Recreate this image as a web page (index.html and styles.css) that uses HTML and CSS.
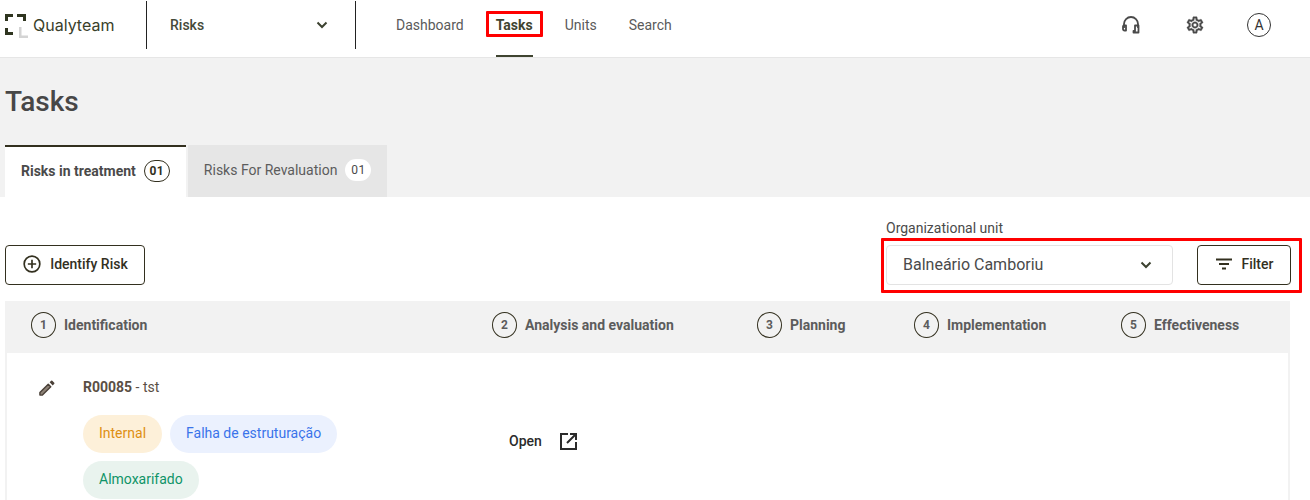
FILE: index.html
```html
<!DOCTYPE html>
<html lang="en">
<head>
<meta charset="utf-8">
<title>Tasks</title>
<link rel="stylesheet" href="styles.css">
</head>
<body>
<header class="topbar">
  <div class="brand">
    <svg class="brand-mark" width="23" height="24" viewBox="0 0 23 24">
      <path d="M8 1.500H1.500V7M12 1.500H19.500V7M8 19.500H1.500V14" fill="none" stroke="#2f3520" stroke-width="3"/>
      <path d="M15.250 13V22.750H23" fill="none" stroke="#d4d4d4" stroke-width="2.500"/>
    </svg>
    <span class="brand-name">Qualyteam</span>
  </div>
  <div class="module">
    <span class="module-name">Risks</span>
    <svg class="chevron" width="12" height="8" viewBox="0 0 12 8"><path d="M1.500 1.500 6 6l4.500-4.500" fill="none" stroke="#3c4230" stroke-width="2"/></svg>
  </div>
  <nav class="nav">
    <a class="nav-link">Dashboard</a>
    <a class="nav-link nav-link-active">Tasks<span class="mark mark-nav"></span></a>
    <a class="nav-link">Units</a>
    <a class="nav-link">Search</a>
  </nav>
  <div class="tools">
    <svg class="tool" width="24" height="24" viewBox="0 0 24 24"><path d="M5 15v-4a7 7 0 0 1 14 0v4" fill="none" stroke="#4a4a4a" stroke-width="1.800"/><path d="M4.500 12.500h2.500v5H5.500a1.500 1.500 0 0 1-1.500-1.500v-2.500zM16 12.500h3.500V19.500h-5V18h1.500z" fill="none" stroke="#4a4a4a" stroke-width="1.800" stroke-linejoin="round"/></svg>
    <svg class="tool" width="24" height="24" viewBox="-2.400 -2.400 28.800 28.800"><path fill="#4a4a4a" stroke="#4a4a4a" stroke-width="0.400" d="M19.430 12.980c.04-.32.07-.64.07-.98s-.03-.66-.07-.98l2.110-1.650c.19-.15.240-.42.120-.64l-2-3.460c-.12-.22-.39-.3-.61-.22l-2.490 1c-.52-.4-1.080-.73-1.690-.98l-.38-2.650A.488.488 0 0 0 14 2h-4c-.25 0-.46.180-.49.420l-.38 2.650c-.61.250-1.170.59-1.690.98l-2.490-1c-.23-.09-.49 0-.61.220l-2 3.460c-.13.220-.07.490.12.640l2.110 1.650c-.04.320-.07.650-.07.980s.03.660.07.980l-2.110 1.650c-.19.150-.240.420-.12.640l2 3.460c.12.220.39.300.61.220l2.490-1c.52.400 1.080.730 1.690.980l.38 2.650c.03.240.24.420.49.420h4c.25 0 .46-.180.49-.420l.38-2.650c.61-.250 1.170-.590 1.690-.980l2.490 1c.23.090.49 0 .61-.220l2-3.460c.12-.220.07-.490-.12-.640l-2.110-1.650zM17.450 11.270c.04.310.05.520.05.730 0 .210-.02.430-.05.730l-.14 1.130.89.700 1.080.840-.70 1.210-1.270-.510-1.040-.420-.90.680c-.43.320-.84.560-1.250.730l-1.060.430-.16 1.130-.20 1.350h-1.400l-.19-1.350-.16-1.130-1.060-.430c-.43-.180-.83-.410-1.230-.710l-.91-.700-1.060.430-1.270.510-.70-1.210 1.080-.840.89-.700-.14-1.130C6.520 12.430 6.500 12.200 6.500 12s.02-.43.050-.720l.14-1.130-.89-.70-1.080-.840.70-1.210 1.270.510 1.040.420.900-.680c.43-.320.84-.560 1.250-.730l1.060-.430.16-1.130.20-1.350h1.390l.19 1.350.16 1.130 1.060.430c.43.180.83.410 1.230.710l.91.700 1.060-.43 1.270-.510.70 1.210-1.070.850-.89.700.14 1.130zM12 8c-2.210 0-4 1.790-4 4s1.790 4 4 4 4-1.790 4-4-1.790-4-4-4zm0 6c-1.100 0-2-.90-2-2s.90-2 2-2 2 .90 2 2-.90 2-2 2z"/></svg>
    <span class="avatar">A</span>
  </div>
</header>

<section class="hero">
  <h1 class="title">Tasks</h1>
  <div class="tabs">
    <div class="tab tab-active">Risks in treatment <span class="count count-active">01</span></div>
    <div class="tab">Risks For Revaluation <span class="count">01</span></div>
  </div>
</section>

<main class="content">
  <div class="toolbar">
    <button class="btn">
      <svg width="20" height="20" viewBox="0 0 24 24"><circle cx="12" cy="12" r="9.400" fill="none" stroke="#33301f" stroke-width="2"/><path d="M12 7v10M7 12h10" stroke="#33301f" stroke-width="2"/></svg>
      Identify Risk
    </button>
    <div class="filters">
      <div class="field">
        <label class="field-label">Organizational unit</label>
        <div class="select">
          <span>Balneário Camboriu</span>
          <svg width="12" height="8" viewBox="0 0 12 8"><path d="M1.500 1.500 6 6l4.500-4.500" fill="none" stroke="#3c4230" stroke-width="2"/></svg>
        </div>
      </div>
      <button class="btn btn-filter">
        <svg width="18" height="12" viewBox="0 0 18 12"><path d="M1 1.500h16M4 6h10M7 10.500h4" stroke="#33301f" stroke-width="1.800"/></svg>
        Filter
      </button>
      <span class="mark mark-filters"></span>
    </div>
  </div>

  <div class="steps">
    <div class="step step-1"><span class="step-num">1</span>Identification</div>
    <div class="step step-2"><span class="step-num">2</span>Analysis and evaluation</div>
    <div class="step step-3"><span class="step-num">3</span>Planning</div>
    <div class="step step-4"><span class="step-num">4</span>Implementation</div>
    <div class="step step-5"><span class="step-num">5</span>Effectiveness</div>
  </div>

  <div class="row">
    <svg class="edit" width="20" height="20" viewBox="0 0 24 24"><path fill="#8d8277" stroke="#4a4038" stroke-width="1.700" stroke-linejoin="round" d="M3.500 20.500v-3L13.500 7.500l3 3-10 10z"/><path fill="#4a4038" d="M20.710 7.040a1 1 0 0 0 0-1.410l-2.340-2.340a1 1 0 0 0-1.410 0l-1.830 1.830 3.750 3.750 1.830-1.830z"/></svg>
    <div class="risk">
      <div class="risk-name"><strong>R00085</strong> - tst</div>
      <div class="chips">
        <span class="chip chip-orange">Internal</span>
        <span class="chip chip-blue">Falha de estruturação</span>
        <span class="chip chip-green">Almoxarifado</span>
      </div>
    </div>
    <a class="open">Open
      <svg width="24" height="24" viewBox="0 0 24 24"><path d="M11 5H4v15h15v-7M13 5h6v6M18.500 5.500 10 14" fill="none" stroke="#2b2b2b" stroke-width="2"/></svg>
    </a>
  </div>
</main>
</body>
</html>
```
FILE: styles.css
```css
* { box-sizing: border-box; }
html, body { margin: 0; height: 500px; overflow: hidden; background: #fff; }
body { font-family: Roboto, sans-serif; font-size: 14px; color: #4a4a4a; }

.topbar { display: flex; align-items: stretch; height: 58px; padding: 0 39px 0 5px; background: #fff; border-bottom: 1px solid #e6e6e6; }
.brand { display: flex; align-items: flex-start; width: 141px; height: 50px; padding-top: 14px; }
.brand-mark { margin-right: 5px; flex: none; }
.brand-name { font-family: "Inter", sans-serif; font-size: 16px; line-height: 22px; font-weight: 400; color: #39402a; }
.module { display: flex; align-items: center; justify-content: space-between; width: 210px; height: 48px; margin-top: 1px; padding: 0 27px 0 23px; border-left: 1px solid #222; border-right: 1px solid #222; }
.module-name { font-weight: 500; color: #454a3a; }
.nav { display: flex; gap: 32px; margin-left: 40px; height: 57px; }
.nav-link { position: relative; display: flex; align-items: center; height: 50px; color: #5a5a5a; }
.nav-link-active { font-weight: 700; color: #3f4430; height: 57px; padding-bottom: 6px; border-bottom: 2px solid #3f4430; }
.tools { display: flex; align-items: center; gap: 40px; height: 50px; margin-left: auto; }
.avatar { display: flex; align-items: center; justify-content: center; width: 24px; height: 24px; border: 1px solid #333; border-radius: 50%; font-size: 14px; color: #333; }

.hero { height: 139px; padding: 0 5px; background: #f2f2f2; display: flex; flex-direction: column; }
.title { margin: 26px 0 0; font-size: 28px; line-height: 36px; font-weight: 500; color: #474747; }
.tabs { display: flex; gap: 2px; margin-top: 25px; height: 52px; }
.tab { display: flex; align-items: center; gap: 8px; padding: 0 16px 2px; background: #e6e6e6; color: #5c5c5c; }
.tab-active { background: #fff; border-top: 2px solid #33301f; padding-bottom: 2px; font-weight: 700; color: #4a4a4a; }
.count { display: inline-flex; align-items: center; justify-content: center; width: 26px; height: 22px; border-radius: 11px; background: #fff; font-size: 12px; color: #4a4a4a; letter-spacing: 0.5px; }
.count-active { background: #fff; border: 1px solid #33301f; font-weight: 700; color: #33301f; }

.content { padding: 0 20px 0 5px; }
.toolbar { display: flex; justify-content: space-between; align-items: flex-end; height: 88px; }
.btn { display: inline-flex; align-items: center; justify-content: center; gap: 8px; height: 40px; background: #fff; border: 1px solid #33301f; border-radius: 4px; font-family: Roboto, sans-serif; font-size: 14px; font-weight: 500; color: #33301f; padding: 0 0 2px; width: 140px; }
.filters { position: relative; display: flex; align-items: flex-end; gap: 24px; margin-right: -1px; }
.field { display: flex; flex-direction: column; gap: 9px; }
.field-label { font-size: 14px; line-height: 16px; color: #4a4a4a; }
.select { display: flex; align-items: center; justify-content: space-between; width: 287px; height: 40px; padding: 0 20px 1px 16px; border: 1px solid #e3e3e3; border-radius: 4px; font-size: 16px; color: #4a4a4a; }
.btn-filter { width: 94px; gap: 9px; }

.mark { position: absolute; border: 3px solid #f00; border-radius: 1px; pointer-events: none; }
.mark-nav { left: -10px; top: 11px; width: 57px; height: 26px; }
.mark-filters { left: -5px; bottom: -8px; right: -11px; height: 55px; }

.steps { position: relative; height: 52px; margin-top: 16px; background: #f2f2f2; font-weight: 700; color: #5c5c5c; }
.step { position: absolute; top: 0; height: 52px; padding-bottom: 4px; display: flex; align-items: center; gap: 8px; }
.step-1 { left: 26px; } .step-2 { left: 487px; } .step-3 { left: 752px; } .step-4 { left: 909px; } .step-5 { left: 1116px; }
.step-num { display: flex; align-items: center; justify-content: center; width: 25px; height: 26px; border: 1px solid #33301f; border-radius: 50%; font-size: 12px; font-weight: 700; }

.row { position: relative; display: flex; height: 147px; border-left: 2px solid #f2f2f2; border-right: 2px solid #f2f2f2; }
.edit { position: absolute; left: 30px; top: 25px; }
.risk { margin-left: 76px; padding-top: 26px; width: 270px; }
.risk-name { line-height: 16px; font-size: 14px; color: #5a4f45; }
.risk-name strong { font-weight: 700; }
.chips { display: flex; flex-wrap: wrap; gap: 8px 8px; margin-top: 20px; }
.chip { height: 38px; line-height: 36px; padding: 0 16px; border-radius: 19px; font-size: 14px; }
.chip-orange { background: #fdf0d9; color: #de8f12; }
.chip-blue { background: #ebf1fe; color: #3a74ea; }
.chip-green { background: #e9f3ee; color: #0f9468; }
.open { position: absolute; left: 502px; top: 76px; display: flex; align-items: center; gap: 15px; font-weight: 500; color: #2b2b2b; }
```
